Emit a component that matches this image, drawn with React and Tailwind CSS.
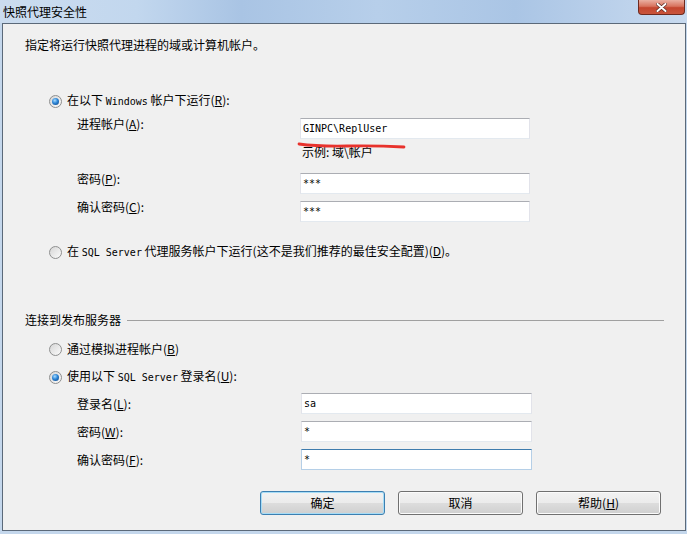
import React from "react";

const mono = "font-['DejaVu_Sans_Mono','Noto_Sans_CJK_SC',monospace] text-[10px]";

function Radio({ checked }) {
  return (
    <span className="flex h-[13px] w-[13px] shrink-0 items-center justify-center rounded-full border border-[#8e8f8f] bg-linear-to-br from-[#d6d6d6] to-[#fbfbfb]">
      {checked && (
        <span className="h-[7px] w-[7px] rounded-full bg-[radial-gradient(circle_at_40%_35%,#a8dcff_0%,#2b84d6_45%,#0d3f7a_100%)]" />
      )}
    </span>
  );
}

function Field({ value, focused, wide }) {
  return (
    <div
      className={`flex h-[21px] items-center border bg-white px-[2px] ${wide ? "w-[231px]" : "w-[230px]"} ${
        focused
          ? "border-t-[#3d7bad] border-x-[#b5cfe7] border-b-[#b5cfe7]"
          : "border-t-[#abadb3] border-x-[#e2e3ea] border-b-[#e3e9ef]"
      }`}
    >
      <span className={mono}>{value}</span>
    </div>
  );
}

function UpperRow({ label, value }) {
  return (
    <div className="flex h-[23px] items-start pl-[74px]">
      <span className="w-[223px] leading-[16px]">{label}</span>
      <div className="mt-[2px]">
        <Field value={value} />
      </div>
    </div>
  );
}

function LowerRow({ label, value, focused, className }) {
  return (
    <div className={`flex h-[21px] items-center pl-[74px] ${className}`}>
      <span className="w-[224px] leading-[16px]">{label}</span>
      <Field value={value} focused={focused} wide />
    </div>
  );
}

function Button({ children, isDefault }) {
  return (
    <button
      className={`h-[24px] w-[125px] rounded-[3px] border bg-[linear-gradient(#f2f2f2_0%,#ebebeb_50%,#dddddd_50%,#cfcfcf_100%)] text-[12px] leading-[16px] ${
        isDefault ? "border-[#3c7fb1] shadow-[inset_0_0_0_1px_#a6dcf6]" : "border-[#707070] shadow-[inset_0_0_0_1px_#fbfbfb]"
      }`}
    >
      {children}
    </button>
  );
}

export default function App() {
  return (
    <div className="flex h-[534px] w-[687px] flex-col overflow-hidden bg-[#c4d7ec] font-['Noto_Sans_CJK_SC',sans-serif] text-[12px] text-black">
      {/* title bar */}
      <div className="flex h-[23px] shrink-0 items-start bg-[linear-gradient(90deg,#cbdcef_0%,#c2d7ee_20%,#a9c4e4_35%,#b7cfea_55%,#aac5e5_75%,#c8daef_100%)]">
        <span className="ml-[3px] mt-[4px] leading-[16px]">快照代理安全性</span>
        <div className="ml-auto mr-[2px] flex h-[15px] w-[47px] items-center justify-center rounded-b-[4px] border border-t-0 border-[#6e2a1f] bg-[linear-gradient(#eab0a2_0%,#d8735e_45%,#c4462f_55%,#c9553c_100%)]">
          <svg width="11" height="9" viewBox="0 0 11 9">
            <path d="M1.5 1 L9.5 8 M9.5 1 L1.5 8" stroke="#5a2a22" strokeWidth="3.4" strokeLinecap="round" />
            <path d="M1.5 1 L9.5 8 M9.5 1 L1.5 8" stroke="#ffffff" strokeWidth="2" strokeLinecap="round" />
          </svg>
        </div>
      </div>

      {/* client area */}
      <div className="ml-[2px] flex h-[508px] w-[684px] flex-col border border-[#5b6979] bg-[#f0f0f0]">
        <p className="ml-[22px] mt-[13px] leading-[16px]">指定将运行快照代理进程的域或计算机帐户。</p>

        <div className="ml-[46px] mt-[40px] flex h-[16px] items-center gap-[5px]">
          <Radio checked />
          <span className="leading-[16px]">
            在以下 <span className={mono}>Windows</span> 帐户下运行(<u>R</u>):
          </span>
        </div>

        <div className="relative mt-[7px]">
          <UpperRow label={<>进程帐户(<u>A</u>):</>} value="GINPC\ReplUser" />
          <p className="ml-[299px] mt-[5px] leading-[16px]">示例: 域\帐户</p>
          <svg className="absolute left-[294px] top-[25px]" width="110" height="10" viewBox="0 0 110 10">
            <path d="M2 3 Q 20 5.5 50 5 T 107 6" stroke="#e8322c" strokeWidth="2.8" fill="none" strokeLinecap="round" />
          </svg>
        </div>

        <div className="mt-[11px]">
          <UpperRow label={<>密码(<u>P</u>):</>} value="***" />
        </div>
        <div className="mt-[5px]">
          <UpperRow label={<>确认密码(<u>C</u>):</>} value="***" />
        </div>

        <div className="ml-[46px] mt-[22px] flex h-[16px] items-center gap-[5px]">
          <Radio />
          <span className="leading-[16px]">
            在 <span className={mono}>SQL Server</span> 代理服务帐户下运行(这不是我们推荐的最佳安全配置)(<u>D</u>)。
          </span>
        </div>

        <div className="ml-[22px] mr-[21px] mt-[52px] flex h-[16px] items-center">
          <span className="leading-[16px]">连接到发布服务器</span>
          <div className="ml-[6px] h-px flex-1 bg-[#a0a0a0]" />
        </div>

        <div className="ml-[46px] mt-[13px] flex h-[16px] items-center gap-[5px]">
          <Radio />
          <span className="leading-[16px]">
            通过模拟进程帐户(<u>B</u>)
          </span>
        </div>
        <div className="ml-[46px] mt-[12px] flex h-[16px] items-center gap-[5px]">
          <Radio checked />
          <span className="leading-[16px]">
            使用以下 <span className={mono}>SQL Server</span> 登录名(<u>U</u>):
          </span>
        </div>

        <LowerRow className="mt-[8px]" label={<>登录名(<u>L</u>):</>} value="sa" />
        <LowerRow className="mt-[7px]" label={<>密码(<u>W</u>):</>} value="*" />
        <LowerRow className="mt-[7px]" label={<>确认密码(<u>F</u>):</>} value="*" focused />

        <div className="ml-[257px] mt-[21px] flex gap-[13px]">
          <Button isDefault>确定</Button>
          <Button>取消</Button>
          <Button>
            帮助(<u>H</u>)
          </Button>
        </div>
      </div>
    </div>
  );
}
